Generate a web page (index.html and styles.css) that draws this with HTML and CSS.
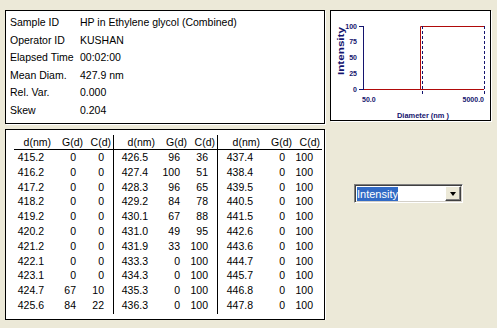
FILE: index.html
```html
<!DOCTYPE html>
<html lang="en">
<head>
  <meta charset="UTF-8">
  <title>Particle size results</title>
  <link rel="stylesheet" href="styles.css">
</head>
<body>
  <div class="page">
    <div class="top">
      <div class="panel info">
        <div class="info-row"><span class="info-label">Sample ID</span><span>HP in Ethylene glycol (Combined)</span></div>
        <div class="info-row"><span class="info-label">Operator ID</span><span>KUSHAN</span></div>
        <div class="info-row"><span class="info-label">Elapsed Time</span><span>00:02:00</span></div>
        <div class="info-row"><span class="info-label">Mean Diam.</span><span>427.9 nm</span></div>
        <div class="info-row"><span class="info-label">Rel. Var.</span><span>0.000</span></div>
        <div class="info-row"><span class="info-label">Skew</span><span>0.204</span></div>
      </div>

      <div class="panel chart">
        <svg width="159" height="109" viewBox="0 0 159 109">
          <g class="tick-text">
            <text x="26" y="15">100</text>
            <text x="26" y="30.75">75</text>
            <text x="26" y="46.5">50</text>
            <text x="26" y="62.25">25</text>
            <text x="26" y="78">0</text>
          </g>
          <line class="navy" x1="32.5" y1="15" x2="32.5" y2="79"/>
          <line class="navy" x1="28" y1="15.5" x2="32" y2="15.5"/>
          <line class="navy" x1="28" y1="78.5" x2="32" y2="78.5"/>
          <path class="red" d="M33 78.5 H153"/>
          <path class="red" d="M89.5 78 V15.5 H153"/>
          <line class="dash" x1="91.5" y1="15" x2="91.5" y2="85"/>
          <line class="dash" x1="153.5" y1="15" x2="153.5" y2="85"/>
          <text class="axis-num" x="31" y="88">50.0</text>
          <text class="axis-num end" x="153" y="88">5000.0</text>
          <text class="axis-title" x="92" y="104" textLength="52" lengthAdjust="spacingAndGlyphs">Diameter (nm )</text>
          <text class="axis-title y-title" transform="translate(9.5 40) rotate(-90)" textLength="48" lengthAdjust="spacingAndGlyphs">Intensity</text>
        </svg>
      </div>
    </div>

    <div class="bottom">
      <div class="panel grid" id="grid"></div>

      <div class="combo">
        <span class="combo-value">Intensity</span>
        <span class="combo-btn"><span class="arrow"></span></span>
      </div>
    </div>
  </div>

  <script>
    const groups = [
      [
        ["415.2", 0, 0], ["416.2", 0, 0], ["417.2", 0, 0], ["418.2", 0, 0],
        ["419.2", 0, 0], ["420.2", 0, 0], ["421.2", 0, 0], ["422.1", 0, 0],
        ["423.1", 0, 0], ["424.7", 67, 10], ["425.6", 84, 22]
      ],
      [
        ["426.5", 96, 36], ["427.4", 100, 51], ["428.3", 96, 65], ["429.2", 84, 78],
        ["430.1", 67, 88], ["431.0", 49, 95], ["431.9", 33, 100], ["433.3", 0, 100],
        ["434.3", 0, 100], ["435.3", 0, 100], ["436.3", 0, 100]
      ],
      [
        ["437.4", 0, 100], ["438.4", 0, 100], ["439.5", 0, 100], ["440.5", 0, 100],
        ["441.5", 0, 100], ["442.6", 0, 100], ["443.6", 0, 100], ["444.7", 0, 100],
        ["445.7", 0, 100], ["446.8", 0, 100], ["447.8", 0, 100]
      ]
    ];

    const grid = document.getElementById("grid");

    groups.forEach((rows, gi) => {
      const group = document.createElement("div");
      group.className = "group";
      if (gi === 0) group.classList.add("first");
      if (gi === groups.length - 1) group.classList.add("last");

      ["d(nm)", "G(d)", "C(d)"].forEach(h => {
        const head = document.createElement("div");
        head.className = "head";
        head.textContent = h;
        group.appendChild(head);
      });

      rows.forEach(row => {
        row.forEach(val => {
          const cell = document.createElement("div");
          cell.className = "cell";
          cell.textContent = val;
          group.appendChild(cell);
        });
      });

      grid.appendChild(group);
    });
  </script>
</body>
</html>
```

FILE: styles.css
```css
body {
  margin: 0;
  background-color: #ece9d8;
  font-family: "Liberation Sans", Arial, sans-serif;
  font-size: 10.5px;
  color: #000;
}

.page {
  padding: 10px 0 0 5px;
}

.top {
  display: flex;
  align-items: flex-start;
  gap: 5px;
  margin-bottom: 5px;
}

.panel {
  background-color: #fff;
  border: 1px solid #000;
  box-sizing: border-box;
  box-shadow: 1px 1px 0 #fff;
}

/* sample info */
.info {
  width: 320px;
  height: 114px;
  padding: 3px 0 0 4px;
}

.info-row {
  display: flex;
  height: 17.6px;
  line-height: 17.6px;
  white-space: nowrap;
}

.info-label {
  width: 70px;
}

/* mini chart */
.chart {
  width: 161px;
  height: 111px;
}

.chart svg {
  display: block;
}

.chart text {
  font-family: "Liberation Sans", Arial, sans-serif;
  font-weight: bold;
  fill: #14146e;
  dominant-baseline: central;
}

.tick-text text {
  font-size: 7px;
  text-anchor: end;
}

.axis-num {
  font-size: 7px;
}

.axis-num.end {
  text-anchor: end;
}

.axis-title {
  font-size: 7.5px;
  text-anchor: middle;
}

.y-title {
  font-size: 9px;
}

.navy {
  stroke: #14146e;
  stroke-width: 1;
}

.red {
  stroke: #b00a0a;
  stroke-width: 1;
  fill: none;
}

.dash {
  stroke: #14146e;
  stroke-width: 1;
  stroke-dasharray: 3 2;
}

/* distribution table */
.bottom {
  display: flex;
  align-items: flex-start;
}

.grid {
  width: 320px;
  height: 191px;
  padding: 5px 2px 0 8px;
  display: flex;
  align-items: flex-start;
}

.group {
  display: grid;
  grid-template-columns: 1fr 32px 28px;
  grid-template-rows: 15px repeat(11, 14.8px);
  width: 104px;
  padding-bottom: 1px;
  border-right: 1px solid #000;
  box-sizing: border-box;
}

.group.first {
  width: 100px;
}

.group.last {
  border-right: none;
}

.head {
  text-align: right;
  padding-right: 2px;
  line-height: 14px;
  border-bottom: 1px solid #000;
  white-space: nowrap;
}

.cell {
  text-align: right;
  padding-right: 9px;
  line-height: 14.8px;
}

/* combo box */
.combo {
  display: flex;
  align-items: center;
  margin: 55px 0 0 29px;
  width: 109px;
  height: 19px;
  box-sizing: border-box;
  background-color: #fff;
  border: 1px solid;
  border-color: #7f7f7f #fff #fff #7f7f7f;
  box-shadow: inset 1px 1px 0 #404040, inset -1px -1px 0 #d4d0c8;
  padding: 1px;
}

.combo-value {
  font-size: 11px;
  line-height: 14px;
  color: #fff;
  background-color: #316ac5;
  margin-left: 1px;
}

.combo-btn {
  margin-left: auto;
  width: 16px;
  height: 15px;
  box-sizing: border-box;
  display: flex;
  align-items: center;
  justify-content: center;
  background-color: #ece9d8;
  border: 1px solid;
  border-color: #fff #404040 #404040 #fff;
  box-shadow: inset -1px -1px 0 #808080;
}

.arrow {
  width: 0;
  height: 0;
  border-left: 3.5px solid transparent;
  border-right: 3.5px solid transparent;
  border-top: 4px solid #000;
}
```
